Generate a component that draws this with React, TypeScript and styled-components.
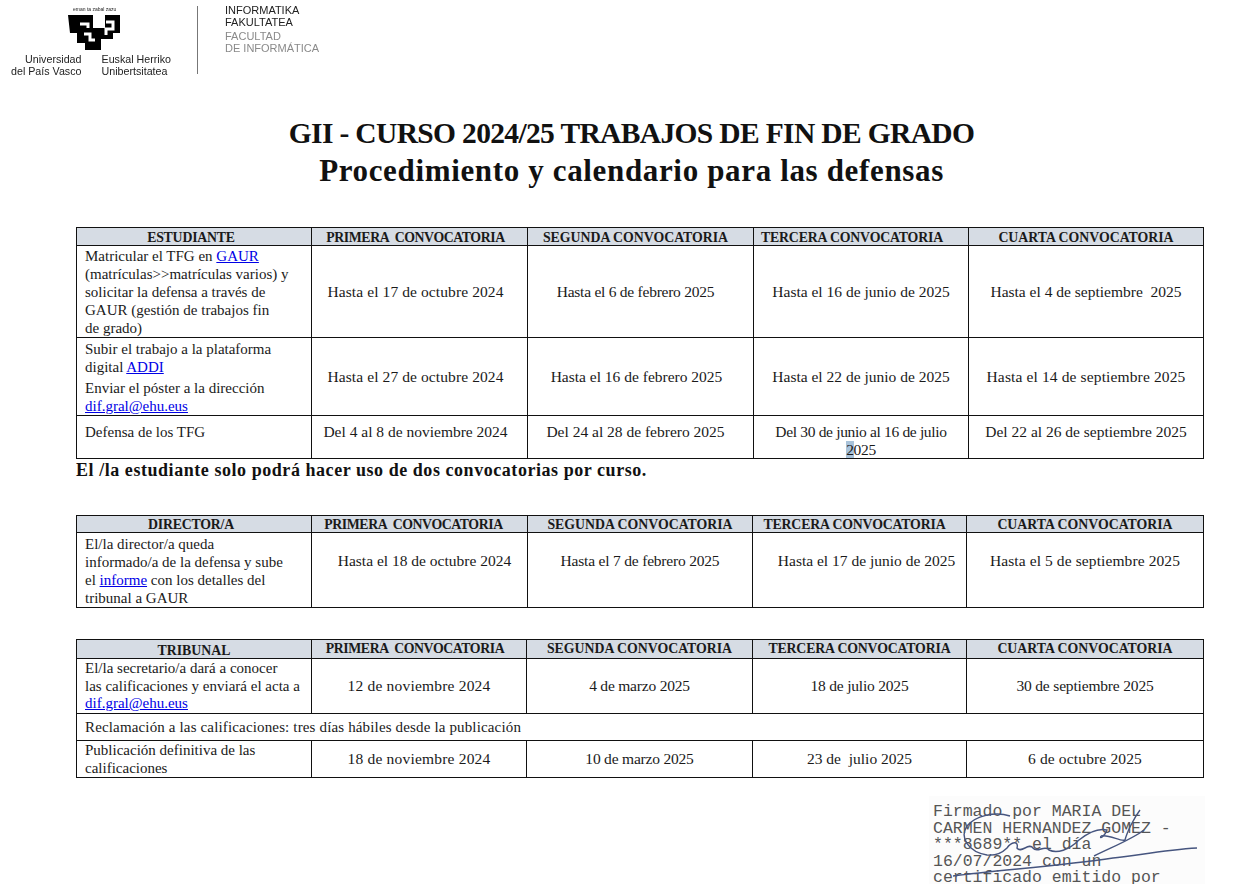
import React from "react";
import styled, { createGlobalStyle } from "styled-components";

const Global = createGlobalStyle`
  html, body { margin: 0; padding: 0; background: #fff; }
  #root { width: 1252px; height: 884px; overflow: hidden; }
`;

const Page = styled.div`
  width: 1252px;
  height: 884px;
  overflow: hidden;
  position: relative;
  background: #fff;
  font-family: "Liberation Serif", serif;
  color: #111;
`;

const Masthead = styled.header`
  height: 78px;
  padding-top: 6px;
  box-sizing: border-box;
  display: flex;
  align-items: flex-start;
  padding-left: 11px;
  filter: blur(0.35px);
`;

const UniBlock = styled.div`
  width: 161px;
  display: flex;
  flex-direction: column;
`;

const Motto = styled.div`
  font: 5px/6px "Liberation Sans", sans-serif;
  color: #222;
  margin-left: 62px;
  height: 6px;
`;

const ShieldBox = styled.div`
  margin: 3px 0 0 57px;
  height: 36px;
`;

const UniNames = styled.div`
  display: flex;
  gap: 20px;
  margin-top: 3px;
  font: 10.7px/11.5px "Liberation Sans", sans-serif;
  color: #222;
`;

const UniName = styled.div<{ $right?: boolean }>`
  text-align: ${(p) => (p.$right ? "right" : "left")};
  white-space: nowrap;
`;

const Divider = styled.div`
  width: 1px;
  height: 68px;
  background: #777;
  margin: 0 27px 0 25px;
`;

const Faculty = styled.div`
  font: 11px/11.5px "Liberation Sans", sans-serif;
  color: #222;
  margin-top: -1px;
`;

const FacultyEs = styled.div`
  color: #8a8a8a;
  margin-top: 3px;
`;

const Title = styled.h1`
  margin: 30px 0 0;
  text-align: center;
  font: bold 29.5px/37px "Liberation Serif", serif;
  color: #111;
  height: 122px;
  padding-left: 11px;
  box-sizing: border-box;
  padding-top: 7px;
`;

const TitleTop = styled.span`
  letter-spacing: -0.65px;
`;

const TitleSub = styled.span`
  font-size: 31px;
  letter-spacing: 0.65px;
`;

const Sheet = styled.table<{ $top: number }>`
  width: 1127px;
  margin: ${(p) => p.$top}px 0 0 76px;
  border-collapse: collapse;
  table-layout: fixed;
  font-size: 15px;
  line-height: 18px;
  color: #1a1a1a;

  td, th {
    border: 1px solid #111;
    padding: 0;
    box-sizing: border-box;
  }
`;

const HeadRow = styled.tr<{ $h: number }>`
  height: ${(p) => p.$h}px;
`;

const BodyRow = styled.tr<{ $h: number }>`
  height: ${(p) => p.$h}px;
`;

const Head = styled.th<{ $drop?: number; $ls?: number; $nudge?: number }>`
  background: #d6dce4;
  font: bold 13.8px/14px "Liberation Serif", serif;
  letter-spacing: ${(p) => p.$ls ?? 0}px;
  text-align: center;
  vertical-align: middle;
  white-space: pre;
  padding-top: ${(p) => p.$drop ?? 0}px !important;
  padding-right: ${(p) => (p.$nudge ?? 0) * 2}px !important;
`;

const Task = styled.td<{ $pad?: number; $ls?: number; $lh?: number }>`
  padding: ${(p) => p.$pad ?? 0}px 8px 0 !important;
  vertical-align: top;
  letter-spacing: ${(p) => p.$ls ?? 0}px;
  line-height: ${(p) => p.$lh ?? 18}px;
  white-space: nowrap;
`;

const Date_ = styled.td<{ $top?: boolean; $ls?: number; $nudge?: number; $lift?: number }>`
  font-size: 15.5px;
  line-height: ${(p) => (p.$top ? 17.5 : 18)}px;
  text-align: center;
  white-space: pre;
  letter-spacing: ${(p) => p.$ls ?? 0}px;
  vertical-align: ${(p) => (p.$top ? "top" : "middle")};
  padding-top: ${(p) => (p.$top ? 7 : 0)}px !important;
  padding-bottom: ${(p) => p.$lift ?? 0}px !important;
  padding-left: ${(p) => Math.max(p.$nudge ?? 0, 0) * 2}px !important;
  padding-right: ${(p) => Math.max(-(p.$nudge ?? 0), 0) * 2}px !important;
`;

const Gap = styled.div`
  margin-top: 3px;
`;

const Anchor = styled.a`
  color: #0000e6;
  text-decoration: underline;
`;

const Selected = styled.span`
  background: #a9c3da;
`;

const Note = styled.p`
  margin: 1px 0 0 76px;
  font: bold 18px/20px "Liberation Serif", serif;
  letter-spacing: 0.55px;
  color: #111;
`;

const Stamp = styled.div`
  position: absolute;
  left: 929px;
  top: 796px;
  width: 276px;
  height: 88px;
  background: #fcfcfc;
  padding: 8px 0 0 4px;
  box-sizing: border-box;
  font: 16.5px/16.5px "Liberation Mono", monospace;
  color: #555;
  white-space: pre;
`;

const Scrawl = styled.svg`
  position: absolute;
  left: 0;
  top: 0;
`;

const Shield = () => (
  <svg width="53" height="36" viewBox="0 0 53 36">
    <path fill="#000" d="M0 0H25V13H37V0H52V18H45V24H33V35H17V28H9V18H2Z" />
    <path
      fill="none"
      stroke="#fff"
      strokeWidth="3"
      d="M12 9H20V13M16 19H22V25H27M38 7H45V14H38V20"
    />
  </svg>
);

const cols1 = [235, 216, 226, 215, 235];
const cols2 = [235, 216, 225, 214, 237];
const cols3 = [235, 215, 226, 214, 237];

const Cols = ({ w }: { w: number[] }) => (
  <colgroup>
    {w.map((v, i) => (
      <col key={i} style={{ width: v }} />
    ))}
  </colgroup>
);

const Mail = () => <Anchor href="#">dif.gral@ehu.eus</Anchor>;

export default function App() {
  return (
    <Page>
      <Global />
      <Masthead>
        <UniBlock>
          <Motto>eman ta zabal zazu</Motto>
          <ShieldBox>
            <Shield />
          </ShieldBox>
          <UniNames>
            <UniName $right>
              Universidad
              <br />
              del País Vasco
            </UniName>
            <UniName>
              Euskal Herriko
              <br />
              Unibertsitatea
            </UniName>
          </UniNames>
        </UniBlock>
        <Divider />
        <Faculty>
          INFORMATIKA
          <br />
          FAKULTATEA
          <FacultyEs>
            FACULTAD
            <br />
            DE INFORMÁTICA
          </FacultyEs>
        </Faculty>
      </Masthead>
      <Title>
        <TitleTop>GII - CURSO 2024/25 TRABAJOS DE FIN DE GRADO</TitleTop>
        <br />
        <TitleSub>Procedimiento y calendario para las defensas</TitleSub>
      </Title>

      <Sheet $top={-3}>
        <Cols w={cols1} />
        <thead>
          <HeadRow $h={18}>
            <Head $drop={2} $ls={-0.2} $nudge={3}>ESTUDIANTE</Head>
            <Head $drop={2} $ls={-0.4} $nudge={4}>PRIMERA  CONVOCATORIA</Head>
            <Head $drop={2} $nudge={5}>SEGUNDA CONVOCATORIA</Head>
            <Head $drop={2} $ls={-0.15} $nudge={9}>TERCERA CONVOCATORIA</Head>
            <Head $drop={2}>CUARTA CONVOCATORIA</Head>
          </HeadRow>
        </thead>
        <tbody>
          <BodyRow $h={91}>
            <Task $pad={1}>
              Matricular el TFG en <Anchor href="#">GAUR</Anchor>
              <br />
              (matrículas&gt;&gt;matrículas varios) y
              <br />
              solicitar la defensa a través de
              <br />
              GAUR (gestión de trabajos fin
              <br />
              de grado)
            </Task>
            <Date_ $ls={0.1} $nudge={-4}>Hasta el 17 de octubre 2024</Date_>
            <Date_ $ls={-0.25} $nudge={-5}>Hasta el 6 de febrero 2025</Date_>
            <Date_>Hasta el 16 de junio de 2025</Date_>
            <Date_>Hasta el 4 de septiembre  2025</Date_>
          </BodyRow>
          <BodyRow $h={78}>
            <Task $pad={2}>
              Subir el trabajo a la plataforma
              <br />
              digital <Anchor href="#">ADDI</Anchor>
              <Gap>
                Enviar el póster a la dirección
                <br />
                <Mail />
              </Gap>
            </Task>
            <Date_ $ls={0.1} $nudge={-4}>Hasta el 27 de octubre 2024</Date_>
            <Date_ $nudge={-4}>Hasta el 16 de febrero 2025</Date_>
            <Date_>Hasta el 22 de junio de 2025</Date_>
            <Date_ $ls={0.13}>Hasta el 14 de septiembre 2025</Date_>
          </BodyRow>
          <BodyRow $h={43}>
            <Task $pad={7}>Defensa de los TFG</Task>
            <Date_ $top $nudge={-4}>Del 4 al 8 de noviembre 2024</Date_>
            <Date_ $top $nudge={-5}>Del 24 al 28 de febrero 2025</Date_>
            <Date_ $top $ls={-0.33}>
              Del 30 de junio al 16 de julio
              <br />
              <Selected>2</Selected>025
            </Date_>
            <Date_ $top>Del 22 al 26 de septiembre 2025</Date_>
          </BodyRow>
        </tbody>
      </Sheet>
      <Note>El /la estudiante solo podrá hacer uso de dos convocatorias por curso.</Note>

      <Sheet $top={35}>
        <Cols w={cols2} />
        <thead>
          <HeadRow $h={17}>
            <Head $drop={1} $ls={-0.2} $nudge={3}>DIRECTOR/A</Head>
            <Head $drop={1} $ls={-0.4} $nudge={6}>PRIMERA  CONVOCATORIA</Head>
            <Head $drop={1}>SEGUNDA CONVOCATORIA</Head>
            <Head $drop={1} $ls={-0.15} $nudge={5}>TERCERA CONVOCATORIA</Head>
            <Head $drop={1}>CUARTA CONVOCATORIA</Head>
          </HeadRow>
        </thead>
        <tbody>
          <BodyRow $h={75}>
            <Task $pad={2}>
              El/la director/a queda
              <br />
              informado/a de la defensa y sube
              <br />
              el <Anchor href="#">informe</Anchor> con los detalles del
              <br />
              tribunal a GAUR
            </Task>
            <Date_ $lift={18} $nudge={5}>Hasta el 18 de octubre 2024</Date_>
            <Date_ $lift={18} $ls={-0.2}>Hasta el 7 de febrero 2025</Date_>
            <Date_ $lift={18} $nudge={7}>Hasta el 17 de junio de 2025</Date_>
            <Date_ $lift={18} $ls={0.1}>Hasta el 5 de septiembre 2025</Date_>
          </BodyRow>
        </tbody>
      </Sheet>

      <Sheet $top={31}>
        <Cols w={cols3} />
        <thead>
          <HeadRow $h={19}>
            <Head $drop={3}>TRIBUNAL</Head>
            <Head $ls={-0.4} $nudge={4}>PRIMERA  CONVOCATORIA</Head>
            <Head>SEGUNDA CONVOCATORIA</Head>
            <Head $ls={-0.15}>TERCERA CONVOCATORIA</Head>
            <Head>CUARTA CONVOCATORIA</Head>
          </HeadRow>
        </thead>
        <tbody>
          <BodyRow $h={55}>
            <Task $pad={1} $lh={17.6}>
              El/la secretario/a dará a conocer
              <br />
              las calificaciones y enviará el acta a
              <br />
              <Mail />
            </Task>
            <Date_ $ls={0.2}>12 de noviembre 2024</Date_>
            <Date_ $ls={-0.2}>4 de marzo 2025</Date_>
            <Date_ $ls={-0.2}>18 de julio 2025</Date_>
            <Date_ $ls={-0.17}>30 de septiembre 2025</Date_>
          </BodyRow>
          <BodyRow $h={27}>
            <Task $pad={4} $ls={0.15} colSpan={5}>
              Reclamación a las calificaciones: tres días hábiles desde la publicación
            </Task>
          </BodyRow>
          <BodyRow $h={37}>
            <Task $pad={1} $lh={17.5}>
              Publicación definitiva de las
              <br />
              calificaciones
            </Task>
            <Date_ $ls={0.2}>18 de noviembre 2024</Date_>
            <Date_ $ls={-0.2}>10 de marzo 2025</Date_>
            <Date_>23 de  julio 2025</Date_>
            <Date_ $ls={0.15}>6 de octubre 2025</Date_>
          </BodyRow>
        </tbody>
      </Sheet>

      <Stamp>
        {"Firmado por MARIA DEL\nCARMEN HERNANDEZ GOMEZ -\n***8689** el día\n16/07/2024 con un\ncertificado emitido por"}
        <Scrawl width="276" height="88" viewBox="0 0 276 88" fill="none" stroke="#46557f" strokeWidth="1.4">
          <path d="M81 20C66 15 46 20 38 30C30 42 40 56 58 59C68 60 74 56 78 52C82 46 90 44 88 52C92 58 100 46 104 52C108 58 116 48 120 54C128 58 140 54 150 44C160 36 170 32 178 34C176 40 170 44 172 40" />
          <path d="M211 14C205 22 198 36 196 44C192 46 180 38 172 40" />
          <path d="M215 34C205 42 190 48 165 60" />
          <path d="M268 52C235 54 205 60 184 62C130 70 70 74 24 80" strokeWidth="1.6" />
        </Scrawl>
      </Stamp>
    </Page>
  );
}
